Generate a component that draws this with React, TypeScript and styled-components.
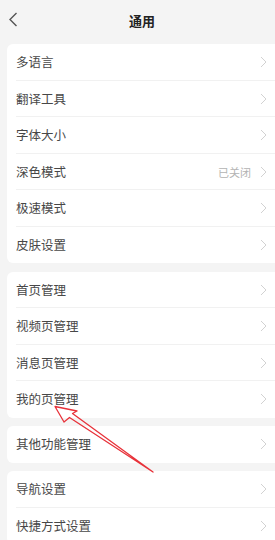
import styled, { createGlobalStyle } from 'styled-components'

const GlobalStyle = createGlobalStyle`
    html, body {
        margin: 0;
        padding: 0;
        background: #f4f4f4;
    }
    body {
        font-family: 'Noto Sans CJK SC', 'Noto Sans', sans-serif;
    }
`

const Page = styled.div`
    position: relative;
    width: 275px;
    height: 540px;
    overflow: hidden;
    background: #f4f4f4;
`
const Header = styled.div`
    height: 44px;
    display: flex;
    align-items: center;
    justify-content: center;
    position: relative;
`
const Back = styled.div`
    position: absolute;
    left: 8px;
    top: 12px;
    display: flex;
`
const Title = styled.div`
    font-size: 13px;
    font-weight: 700;
    color: #222;
    padding-left: 9px;
    margin-top: -3px;
`
const Groups = styled.div`
    display: flex;
    flex-direction: column;
    gap: 8.5px;
    margin: 0 -12px 0 7px;
`
const Card = styled.div`
    background: #fff;
    border-radius: 6px;
    overflow: hidden;
`
const Row = styled.div`
    height: 36.5px;
    display: flex;
    align-items: center;
    padding: 0 20px 0 9px;
    position: relative;

    &:not(:last-child)::after {
        content: '';
        position: absolute;
        left: 9px;
        right: 0;
        bottom: 0;
        height: 1px;
        background: #f1f1f1;
    }
`
const Label = styled.span`
    flex: 1;
    font-size: 12.5px;
    color: #474747;
    margin-top: -1px;
`
const Value = styled.span`
    font-size: 11px;
    color: #b3b3b3;
    margin-right: 9px;
`
const Chevron = styled.svg`
    width: 7px;
    height: 12px;
    flex-shrink: 0;
`
const Overlay = styled.svg`
    position: absolute;
    left: 0;
    top: 0;
    pointer-events: none;
`

type Item = { label: string; value?: string }

const groups: Item[][] = [
    [
        { label: '多语言' },
        { label: '翻译工具' },
        { label: '字体大小' },
        { label: '深色模式', value: '已关闭' },
        { label: '极速模式' },
        { label: '皮肤设置' },
    ],
    [
        { label: '首页管理' },
        { label: '视频页管理' },
        { label: '消息页管理' },
        { label: '我的页管理' },
    ],
    [{ label: '其他功能管理' }],
    [{ label: '导航设置' }, { label: '快捷方式设置' }],
]

export default function App() {
    return (
        <Page>
            <GlobalStyle />
            <Header>
                <Back>
                    <svg width="10" height="15" viewBox="0 0 10 15">
                        <path d="M8.5 1 L2 7.5 L8.5 14" fill="none" stroke="#555" strokeWidth="1.4" />
                    </svg>
                </Back>
                <Title>通用</Title>
            </Header>
            <Groups>
                {groups.map((group, gi) => (
                    <Card key={gi}>
                        {group.map(item => (
                            <Row key={item.label}>
                                <Label>{item.label}</Label>
                                {item.value && <Value>{item.value}</Value>}
                                <Chevron viewBox="0 0 7 12">
                                    <path d="M1 1 L6 6 L1 11" fill="none" stroke="#d2d2d2" strokeWidth="1" />
                                </Chevron>
                            </Row>
                        ))}
                    </Card>
                ))}
            </Groups>
            <Overlay width="275" height="540" viewBox="0 0 275 540">
                <path
                    d="M55 406.5 L77 411 L72.5 413.5 L153 472 L69.5 417.5 L64 422 Z"
                    fill="none"
                    stroke="#e8323a"
                    strokeWidth="1.3"
                    strokeLinejoin="round"
                />
            </Overlay>
        </Page>
    )
}
